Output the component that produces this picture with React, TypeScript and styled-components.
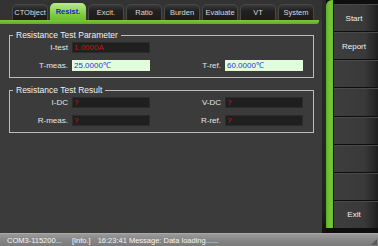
import styled, { createGlobalStyle } from "styled-components";

import type React from "react";

/* -----------------------------------------------
 * CT tester - Resist. page
 * ----------------------------------------------- */

const GlobalStyle = createGlobalStyle`
  html, body {
    margin: 0;
    padding: 0;
    background: #1a1a1a;
  }
  * {
    box-sizing: border-box;
  }
`;

const tabs = ["CTObject", "Resist.", "Excit.", "Ratio", "Burden", "Evaluate", "VT", "System"];
const sideButtons = ["Start", "Report", "", "", "", "", "", "Exit"];

type Field = { label: string; value: string; kind: "dark" | "light" };

const paramRows: [Field, Field | null][] = [
  [{ label: "I-test", value: "1.0000A", kind: "dark" }, null],
  [
    { label: "T-meas.", value: "25.0000℃", kind: "light" },
    { label: "T-ref.", value: "60.0000℃", kind: "light" },
  ],
];

const resultRows: [Field, Field | null][] = [
  [
    { label: "I-DC", value: "?", kind: "dark" },
    { label: "V-DC", value: "?", kind: "dark" },
  ],
  [
    { label: "R-meas.", value: "?", kind: "dark" },
    { label: "R-ref.", value: "?", kind: "dark" },
  ],
];

const FieldCells: React.FC<{ field: Field | null }> = ({ field }) => {
  if (!field) {
    return (
      <>
        <span />
        <span />
      </>
    );
  }
  return (
    <>
      <Label>{field.label}</Label>
      <ValueBox $kind={field.kind}>{field.value}</ValueBox>
    </>
  );
};

const Group: React.FC<{ title: string; rows: [Field, Field | null][] }> = ({ title, rows }) => (
  <GroupBox>
    <legend>{title}</legend>
    <FieldGrid>
      {rows.map((row, i) => (
        <FieldCellsRow key={i}>
          <FieldCells field={row[0]} />
          <FieldCells field={row[1]} />
        </FieldCellsRow>
      ))}
    </FieldGrid>
  </GroupBox>
);

const App: React.FC = () => {
  return (
    <>
      <GlobalStyle />
      <Screen>
        <Body>
          <MainColumn>
            <TabStrip>
              {tabs.map((t) => (
                <Tab key={t} $active={t === "Resist."}>
                  {t}
                </Tab>
              ))}
            </TabStrip>
            <GreenRail />
            <Panel>
              <Group title="Resistance Test Parameter" rows={paramRows} />
              <Group title="Resistance Test Result" rows={resultRows} />
            </Panel>
          </MainColumn>
          <Divider />
          <SideBar>
            <GreenPost />
            <ButtonStack>
              {sideButtons.map((b, i) => (
                <SideButton key={i}>{b}</SideButton>
              ))}
            </ButtonStack>
          </SideBar>
        </Body>
        <StatusBar>
          <span>COM3-115200...</span>
          <span>[Info.]</span>
          <span>16:23:41 Message: Data loading......</span>
          <Grip />
        </StatusBar>
      </Screen>
    </>
  );
};

const Screen = styled.div`
  width: 378px;
  height: 246px;
  display: flex;
  flex-direction: column;
  overflow: hidden;
  font-family: "Liberation Sans", Arial, sans-serif;
  color: #e8e8e8;
`;

const Body = styled.div`
  flex: 1;
  display: flex;
  min-height: 0;
`;

const MainColumn = styled.div`
  width: 322px;
  display: flex;
  flex-direction: column;
  background: #3b3b3b;
`;

const TabStrip = styled.div`
  height: 20px;
  display: flex;
  align-items: flex-end;
  gap: 2px;
  padding-left: 12px;
  background: #333333;
`;

const Tab = styled.div<{ $active?: boolean }>`
  width: 36px;
  height: ${(p) => (p.$active ? "17px" : "16px")};
  display: flex;
  align-items: center;
  justify-content: center;
  border-radius: 5px 5px 0 0;
  font-size: 7.5px;
  font-weight: ${(p) => (p.$active ? "bold" : "normal")};
  color: ${(p) => (p.$active ? "#1520d8" : "#dcdcdc")};
  background: ${(p) =>
    p.$active
      ? "linear-gradient(#b9ea8a, #7ccc3e 70%, #6abf2e)"
      : "linear-gradient(#3a3a3a, #202020 40%, #1c1c1c)"};
  border: ${(p) => (p.$active ? "none" : "1px solid #474747")};
  border-bottom: none;
`;

const GreenRail = styled.div`
  height: 4px;
  margin-right: 3px;
  background: linear-gradient(#78c93a, #5fae26);
  border-radius: 0 0 3px 0;
`;

const Panel = styled.div`
  flex: 1;
  display: flex;
  flex-direction: column;
  gap: 8px;
  padding: 7px 8px 0 9px;
`;

const GroupBox = styled.fieldset`
  margin: 0;
  padding: 2px 0 6px 0;
  border: 1px solid #bdbdbd;
  border-radius: 0;
  width: 305px;

  legend {
    margin-left: 3px;
    padding: 0 3px;
    font-size: 8.5px;
    line-height: 9px;
    color: #f0f0f0;
  }
`;

const FieldGrid = styled.div`
  display: flex;
  flex-direction: column;
  gap: 7px;
`;

const FieldCellsRow = styled.div`
  display: grid;
  grid-template-columns: 62px 78px 75px 78px;
  align-items: center;
  height: 11px;
`;

const Label = styled.span`
  text-align: right;
  padding-right: 4px;
  font-size: 8px;
  color: #e6e6e6;
`;

const ValueBox = styled.div<{ $kind: "dark" | "light" }>`
  height: 11px;
  line-height: 10px;
  padding-left: 1px;
  font-size: 8px;
  white-space: nowrap;
  overflow: hidden;
  color: ${(p) => (p.$kind === "light" ? "#2a32e6" : "#d01212")};
  background: ${(p) => (p.$kind === "light" ? "#e2fddc" : "#1f1f1f")};
  border: 1px solid ${(p) => (p.$kind === "light" ? "#e2fddc" : "#2b2b2b")};
`;

const Divider = styled.div`
  width: 4px;
  background: linear-gradient(#2a2a2a, #222222 90%, #111111);
`;

const SideBar = styled.div`
  flex: 1;
  display: flex;
  background: #0e0e0e;
`;

const GreenPost = styled.div`
  width: 7px;
  margin-bottom: 5px;
  border-radius: 6px 0 0 0;
  background: linear-gradient(90deg, #5fae26, #76c83a 60%, #6abf2e);
`;

const ButtonStack = styled.div`
  flex: 1;
  display: flex;
  flex-direction: column;
  gap: 1px;
  padding: 4px 0 5px 1px;
  background: #0e0e0e;
`;

const SideButton = styled.div`
  flex: 1;
  display: flex;
  align-items: center;
  justify-content: center;
  padding-right: 4px;
  font-size: 8px;
  color: #f2f2f2;
  background: linear-gradient(90deg, #3e3e3e, #393939 70%, #2a2a2a 88%, #1e1e1e);
  border-top: 1px solid #4a4a4a;
`;

const StatusBar = styled.div`
  position: relative;
  height: 13px;
  display: flex;
  align-items: center;
  gap: 10px;
  padding-left: 7px;
  font-size: 7.5px;
  color: #f4f4f4;
  background: linear-gradient(#9a9a9a, #868686 50%, #7a7a7a);
  border-top: 1px solid #a8a8a8;

  span:nth-child(3) {
    margin-left: -3px;
  }
`;

const Grip = styled.div`
  position: absolute;
  right: 1px;
  bottom: 1px;
  width: 0;
  height: 0;
  border-left: 6px solid transparent;
  border-bottom: 6px solid #5a5a5a;
`;

export default App;
